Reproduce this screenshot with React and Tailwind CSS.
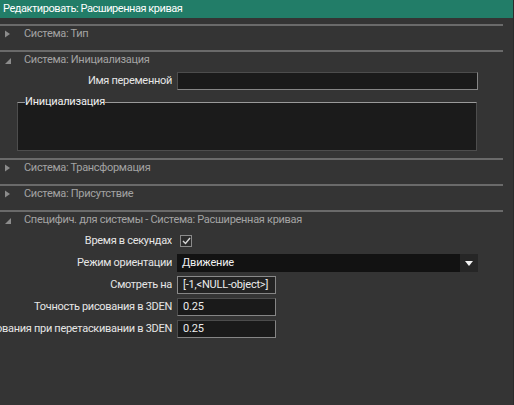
import { useState } from "react";

const font = { fontFamily: "Roboto, 'Noto Sans', sans-serif" };

function Arrow({ open }) {
  return open ? (
    <svg width="8" height="8" viewBox="0 0 8 8" className="mt-[4px]">
      <path d="M7 1 L7 7 L1 7 Z" fill="#8c8c8c" />
    </svg>
  ) : (
    <svg width="8" height="8" viewBox="0 0 8 8" className="mt-[3px]">
      <path d="M1 0.5 L6 4 L1 7.5 Z" fill="#8c8c8c" />
    </svg>
  );
}

function Section({ title, open, children }) {
  return (
    <div className="border-t-2 border-[#6a6a6a]">
      <div
        className={
          (open ? "h-[20px]" : "h-[24px]") +
          " flex items-start pt-[1px] text-[11px] tracking-[-0.3px] leading-[14px] text-[#a3a3a3]"
        }
      >
        <div className="w-[24px] pl-[4px] flex">
          <Arrow open={open} />
        </div>
        <span>{title}</span>
      </div>
      {open && children}
    </div>
  );
}

function Row({ label, children }) {
  return (
    <div className="flex items-center h-[18px] gap-[5px]">
      <div className="w-[172px] shrink-0 flex justify-end overflow-hidden whitespace-nowrap text-[11px] tracking-[-0.3px] text-[#e6e6e6]">
        <span>{label}</span>
      </div>
      {children}
    </div>
  );
}

function Field({ value, className }) {
  return (
    <div
      className={
        "h-[18px] bg-[#1a1a1a] border border-[#4c4c4c] border-b-[#858585] border-r-[#858585] px-[5px] text-[11px] tracking-[-0.2px] leading-[16px] text-[#ececec] whitespace-nowrap overflow-hidden " +
        className
      }
    >
      {value}
    </div>
  );
}

export default function App() {
  const [seconds, setSeconds] = useState(true);

  return (
    <div
      className="w-[514px] h-[405px] bg-[#343434] border-r border-[#2a2a2a] overflow-hidden flex flex-col"
      style={font}
    >
      <div className="h-[18px] bg-[#227d68] px-[3px] text-[11px] tracking-[-0.45px] leading-[18px] text-white">
        Редактировать: Расширенная кривая
      </div>

      <div className="mt-[6px] mr-[10px]">
        <Section title="Система: Тип" />

        <Section title="Система: Инициализация" open>
          <Row label="Имя переменной">
            <Field value="" className="w-[301px]" />
          </Row>
          <fieldset className="ml-[17px] mt-[6px] mb-[7px] w-[460px] h-[55px] border border-[#4d4d4d] border-t-[#9a9a9a] bg-[#1b1b1b]">
            <legend className="ml-[7px] text-[11px] tracking-[-0.2px] leading-[12px] text-[#f0f0f0]">Инициализация</legend>
          </fieldset>
        </Section>

        <Section title="Система: Трансформация" />
        <Section title="Система: Присутствие" />

        <Section title="Специфич. для системы - Система: Расширенная кривая" open>
          <div className="flex flex-col gap-[4px]">
            <Row label="Время в секундах">
              <button
                onClick={() => setSeconds(!seconds)}
                className="ml-[3px] w-[12px] h-[12px] border border-[#8a8a8a] bg-[#2c2c2c] flex items-center justify-center"
              >
                {seconds && (
                  <svg width="9" height="8" viewBox="0 0 9 8">
                    <path d="M1 4 L3.5 6.5 L8 1" stroke="#d8d8d8" strokeWidth="1.4" fill="none" />
                  </svg>
                )}
              </button>
            </Row>
            <Row label="Режим ориентации">
              <div className="w-[301px] h-[18px] flex bg-[#121212]">
                <span className="flex-1 px-[5px] text-[11px] tracking-[-0.2px] leading-[18px] text-[#f0f0f0]">Движение</span>
                <div className="w-[18px] bg-[#262626] flex items-center justify-center">
                  <svg width="8" height="5" viewBox="0 0 8 5">
                    <path d="M0 0 L8 0 L4 5 Z" fill="#f2f2f2" />
                  </svg>
                </div>
              </div>
            </Row>
            <Row label="Смотреть на">
              <Field value="[-1,<NULL-object>]" className="w-[99px] bg-[#232323] border-[#8a8a8a]" />
            </Row>
            <Row label="Точность рисования в 3DEN">
              <Field value="0.25" className="w-[99px]" />
            </Row>
            <Row label="Точность рисования при перетаскивании в 3DEN">
              <Field value="0.25" className="w-[99px]" />
            </Row>
          </div>
        </Section>
      </div>
    </div>
  );
}
